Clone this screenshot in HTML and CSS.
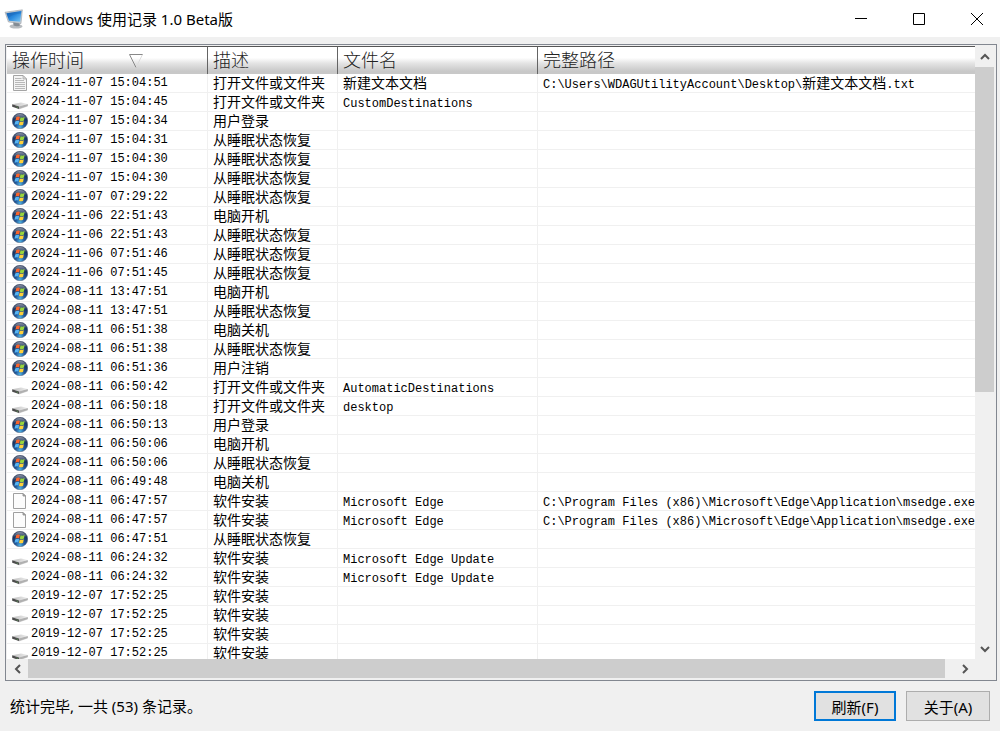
FILE: index.html
```html
<!DOCTYPE html>
<html lang="zh-CN">
<head>
    <meta charset="UTF-8">
    <meta name="viewport" content="width=device-width, initial-scale=1.0">
    <title>Windows 使用记录 1.0 Beta版</title>
    <link rel="stylesheet" href="styles.css">
</head>
<body>
    <!-- Shared icons -->
    <svg class="defs" aria-hidden="true">
        <defs>
            <radialGradient id="orbFill" cx="50%" cy="90%" r="80%">
                <stop offset="0" stop-color="#4fb4e4"/>
                <stop offset="0.35" stop-color="#22589a"/>
                <stop offset="1" stop-color="#122448"/>
            </radialGradient>
            <linearGradient id="orbGloss" x1="0" y1="0" x2="0" y2="1">
                <stop offset="0" stop-color="#fff" stop-opacity="0.5"/>
                <stop offset="1" stop-color="#fff" stop-opacity="0"/>
            </linearGradient>
            <linearGradient id="screenFill" x1="0" y1="0" x2="1" y2="1">
                <stop offset="0" stop-color="#1560b4"/>
                <stop offset="0.5" stop-color="#2a8ade"/>
                <stop offset="1" stop-color="#7cc8f6"/>
            </linearGradient>
            <linearGradient id="driveTop" x1="0" y1="0" x2="1" y2="0">
                <stop offset="0" stop-color="#bdbdbd"/>
                <stop offset="1" stop-color="#f0f0f0"/>
            </linearGradient>
        </defs>
        <symbol id="orb" viewBox="0 0 16 16">
            <circle cx="8" cy="8" r="7.8" fill="url(#orbFill)" stroke="#5c6880" stroke-width="0.5"/>
            <path d="M1 6.6A7.2 7.2 0 0 1 15 6.6Q8 2.6 1 6.6Z" fill="url(#orbGloss)"/>
            <path d="M4.2 4.2Q6 3 7.9 4L7.2 7.4Q5.4 6.6 3.4 7.7Z" fill="#f8642c"/>
            <path d="M8.5 4.3Q10.4 5.2 12.6 4.1L11.9 7.6Q9.8 8.6 7.8 7.7Z" fill="#98d43c"/>
            <path d="M3.2 8.4Q5.2 7.3 7.1 8.1L6.4 11.5Q4.5 10.7 2.5 11.8Z" fill="#54b4f4"/>
            <path d="M7.7 8.4Q9.7 9.3 11.8 8.3L11.1 11.8Q9 12.8 7 11.8Z" fill="#ffd038"/>
        </symbol>
        <symbol id="drive" viewBox="0 0 16 16">
            <path d="M1 12L7 15.4L15.6 12.6V11Z" fill="#dedede"/>
            <path d="M.2 10.2L9 8.6L15.8 9.9L7 12.4Z" fill="url(#driveTop)"/>
            <path d="M.2 10.2L7 12.4V15L.2 12.8Z" fill="#4c4c4c"/>
            <path d="M7 12.4L15.8 9.9V12L7 15Z" fill="#b0b0b0"/>
            <path d="M4.6 12.6L5.8 13V13.7L4.6 13.3Z" fill="#5fae5a"/>
        </symbol>
        <symbol id="text" viewBox="0 0 16 16">
            <path d="M1.5 .5H11L14.5 4V15.5H1.5Z" fill="#f4f4f4" stroke="#a4a4a4"/>
            <path d="M11 .5V4H14.5Z" fill="#dcdcdc" stroke="#9a9a9a" stroke-width="0.6"/>
            <path d="M3 3.5H9.5M3 5.5H12M3 7.5H13M3 9.5H13M3 11.5H13M3 13.5H13" stroke="#b8b8b8"/>
        </symbol>
        <symbol id="blank" viewBox="0 0 16 16">
            <path d="M1.5 .5H11L13.5 3V15.5H1.5Z" fill="#fcfcfc" stroke="#a0a0a0"/>
            <path d="M11 .5V3H13.5Z" fill="#b4b4b4" stroke="#888" stroke-width="0.8"/>
        </symbol>
    </svg>

    <header class="titlebar">
        <svg class="app-icon" viewBox="0 0 20 20" aria-hidden="true">
            <ellipse cx="12" cy="17.4" rx="6.5" ry="2.2" fill="#b8bcc0"/>
            <path d="M9 12L15 13L16 16.4Q13 18 9.6 16.6Z" fill="#848c94"/>
            <path d="M1 3.2L18.4 .8L17 14.6L4.4 13Z" fill="#c6ccd2" stroke="#8e969e" stroke-width="0.5"/>
            <path d="M2.4 4.2L17.4 2L16.2 12.8L5 11.8Z" fill="url(#screenFill)"/>
            <path d="M4.2 9.2Q8 5 17.1 4.4L17.4 2L2.4 4.2Z" fill="#1458a8" opacity="0.3"/>
        </svg>
        <h1 class="title">Windows 使用记录 1.0 Beta版</h1>
        <div class="window-buttons">
            <button type="button" aria-label="最小化"><svg viewBox="0 0 12 12"><path d="M0 5.5H12"/></svg></button>
            <button type="button" aria-label="最大化"><svg viewBox="0 0 12 12"><path d="M.5 .5H11.5V11.5H.5Z"/></svg></button>
            <button type="button" aria-label="关闭"><svg viewBox="0 0 12 12"><path d="M0 0L12 12M12 0L0 12"/></svg></button>
        </div>
    </header>

    <main class="list">
        <div class="table-wrap">
            <table>
                <colgroup>
                    <col class="col-time">
                    <col class="col-desc">
                    <col class="col-name">
                    <col>
                </colgroup>
                <thead>
                    <tr>
                        <th>
                            <div class="sorted">操作时间
                                <svg class="sort" viewBox="0 0 14 14" aria-hidden="true"><path d="M14 .5H.5L7 13.5" stroke="#888"/><path d="M7 13.5L13.5 .5" stroke="#ddd"/></svg>
                            </div>
                        </th>
                        <th>描述</th>
                        <th>文件名</th>
                        <th>完整路径</th>
                    </tr>
                </thead>
                <tbody id="records"></tbody>
            </table>
        </div>
        <div class="scroll vertical">
            <button type="button" aria-label="向上滚动"><svg viewBox="0 0 10 10"><path d="M1 7L5 3L9 7"/></svg></button>
            <div class="track"><div class="thumb"></div></div>
            <button type="button" aria-label="向下滚动"><svg viewBox="0 0 10 10"><path d="M1 3L5 7L9 3"/></svg></button>
        </div>
        <div class="scroll horizontal">
            <button type="button" aria-label="向左滚动"><svg viewBox="0 0 10 10"><path d="M7 1L3 5L7 9"/></svg></button>
            <div class="track"><div class="thumb"></div></div>
            <button type="button" aria-label="向右滚动"><svg viewBox="0 0 10 10"><path d="M3 1L7 5L3 9"/></svg></button>
        </div>
    </main>

    <footer class="footer">
        <p class="status">统计完毕, 一共 (53) 条记录。</p>
        <button type="button" class="button primary">刷新(F)</button>
        <button type="button" class="button">关于(A)</button>
    </footer>

    <script>
        const edge = 'C:\\Program Files (x86)\\Microsoft\\Edge\\Application\\msedge.exe,0';

        // icon, time, description, file name, full path
        const records = [
            ['text', '2024-11-07 15:04:51', '打开文件或文件夹', '新建文本文档', 'C:\\Users\\WDAGUtilityAccount\\Desktop\\新建文本文档.txt'],
            ['drive', '2024-11-07 15:04:45', '打开文件或文件夹', 'CustomDestinations'],
            ['orb', '2024-11-07 15:04:34', '用户登录'],
            ['orb', '2024-11-07 15:04:31', '从睡眠状态恢复'],
            ['orb', '2024-11-07 15:04:30', '从睡眠状态恢复'],
            ['orb', '2024-11-07 15:04:30', '从睡眠状态恢复'],
            ['orb', '2024-11-07 07:29:22', '从睡眠状态恢复'],
            ['orb', '2024-11-06 22:51:43', '电脑开机'],
            ['orb', '2024-11-06 22:51:43', '从睡眠状态恢复'],
            ['orb', '2024-11-06 07:51:46', '从睡眠状态恢复'],
            ['orb', '2024-11-06 07:51:45', '从睡眠状态恢复'],
            ['orb', '2024-08-11 13:47:51', '电脑开机'],
            ['orb', '2024-08-11 13:47:51', '从睡眠状态恢复'],
            ['orb', '2024-08-11 06:51:38', '电脑关机'],
            ['orb', '2024-08-11 06:51:38', '从睡眠状态恢复'],
            ['orb', '2024-08-11 06:51:36', '用户注销'],
            ['drive', '2024-08-11 06:50:42', '打开文件或文件夹', 'AutomaticDestinations'],
            ['drive', '2024-08-11 06:50:18', '打开文件或文件夹', 'desktop'],
            ['orb', '2024-08-11 06:50:13', '用户登录'],
            ['orb', '2024-08-11 06:50:06', '电脑开机'],
            ['orb', '2024-08-11 06:50:06', '从睡眠状态恢复'],
            ['orb', '2024-08-11 06:49:48', '电脑关机'],
            ['blank', '2024-08-11 06:47:57', '软件安装', 'Microsoft Edge', edge],
            ['blank', '2024-08-11 06:47:57', '软件安装', 'Microsoft Edge', edge],
            ['orb', '2024-08-11 06:47:51', '从睡眠状态恢复'],
            ['drive', '2024-08-11 06:24:32', '软件安装', 'Microsoft Edge Update'],
            ['drive', '2024-08-11 06:24:32', '软件安装', 'Microsoft Edge Update'],
            ['drive', '2019-12-07 17:52:25', '软件安装'],
            ['drive', '2019-12-07 17:52:25', '软件安装'],
            ['drive', '2019-12-07 17:52:25', '软件安装'],
            ['drive', '2019-12-07 17:52:25', '软件安装']
        ];

        // Chinese parts of a name are set larger than the monospaced Latin ones
        function mixed(text) {
            return text.replace(/[\u4e00-\u9fff]+/g, '<span class="cjk">$&</span>');
        }

        document.getElementById('records').innerHTML = records.map(([icon, time, desc, name = '', path = '']) => `
            <tr>
                <td><div class="entry"><svg class="icon" aria-hidden="true"><use href="#${icon}"/></svg><span class="mono">${time}</span></div></td>
                <td>${desc}</td>
                <td><span class="mono">${mixed(name)}</span></td>
                <td><span class="mono">${mixed(path)}</span></td>
            </tr>`).join('');
    </script>
</body>
</html>
```

FILE: styles.css
```css
* {
    box-sizing: border-box;
}

body {
    margin: 0;
    height: 100vh;
    display: flex;
    flex-direction: column;
    background-color: #f0f0f0;
    color: #000;
    font-family: "Noto Sans", "Noto Sans CJK SC", sans-serif;
    font-size: 15px;
    overflow: hidden;
}

button {
    font-family: inherit;
    color: inherit;
}

.defs {
    position: absolute;
    width: 0;
    height: 0;
}

/* Title bar */
.titlebar {
    display: flex;
    align-items: center;
    flex-shrink: 0;
    height: 37px;
    padding-left: 4px;
    background-color: #fff;
}

.app-icon {
    width: 20px;
    height: 20px;
}

.title {
    flex: 1;
    margin: 0 0 0 5px;
    font-size: 15px;
    line-height: 20px;
    font-weight: normal;
}

.window-buttons {
    display: flex;
    gap: 12px;
}

.window-buttons button {
    display: flex;
    align-items: center;
    justify-content: center;
    width: 46px;
    height: 36px;
    padding: 0;
    border: 0;
    background: none;
}

.window-buttons svg {
    width: 12px;
    height: 12px;
    fill: none;
    stroke: #000;
}

/* Record list */
.list {
    flex: 1;
    min-height: 0;
    display: grid;
    grid-template-columns: minmax(0, 1fr) 20px;
    grid-template-rows: minmax(0, 1fr) 20px;
    margin: 7px 3px 0 5px;
    padding: 1px;
    border: 1px solid #828790;
    background-color: #f0f0f0;
}

.table-wrap {
    overflow: hidden;
    background-color: #fff;
}

table {
    width: 100%;
    table-layout: fixed;
    border-collapse: separate;
    border-spacing: 0;
}

.col-time {
    width: 201px;
}

.col-desc {
    width: 130px;
}

.col-name {
    width: 200px;
}

th {
    height: 28px;
    padding: 0 5px;
    border-top: 1px solid #555;
    border-right: 1px solid #646464;
    background: linear-gradient(#fff 40%, #e4e4e4 60%, #c8c8c8 90%);
    color: #222;
    font-family: "Noto Sans CJK SC", sans-serif;
    font-size: 18px;
    line-height: 24px;
    font-weight: 300;
    text-align: left;
    vertical-align: top;
}

th:last-child,
td:last-child {
    border-right: 0;
}

.sorted {
    display: flex;
    align-items: center;
    gap: 45px;
}

.sort {
    width: 14px;
    height: 14px;
    margin-top: 3px;
    fill: none;
}

td {
    height: 19px;
    padding: 0 5px;
    border-right: 1px solid #f0f0f0;
    border-bottom: 1px solid #f0f0f0;
    font-family: "Noto Sans CJK SC", sans-serif;
    font-size: 14px;
    line-height: 16px;
    white-space: nowrap;
    vertical-align: top;
    overflow: hidden;
}

td:last-child {
    padding-right: 0;
}

.entry {
    display: flex;
    align-items: center;
    gap: 3px;
    height: 18px;
}

.icon {
    width: 16px;
    height: 16px;
}

.mono {
    font-family: "Liberation Mono", "Noto Sans CJK SC", monospace;
    font-size: 12px;
    line-height: 12px;
}

.cjk {
    font-size: 14px;
}

/* Scroll bars */
.scroll {
    display: flex;
    background-color: #f0f0f0;
}

.scroll button {
    display: flex;
    align-items: center;
    justify-content: center;
    flex: 0 0 21px;
    padding: 0;
    border: 0;
    background: none;
}

.scroll svg {
    width: 10px;
    height: 10px;
    fill: none;
    stroke: #555;
    stroke-width: 2;
}

.track {
    flex: 1;
}

.thumb {
    background-color: #cdcdcd;
}

.vertical {
    flex-direction: column;
}

.vertical .thumb {
    width: 19px;
    height: 57%;
}

.horizontal .thumb {
    width: 99%;
    height: 19px;
}

/* Footer */
.footer {
    display: flex;
    align-items: center;
    flex-shrink: 0;
    gap: 10px;
    padding: 10px;
}

.status {
    flex: 1;
    margin: 0;
    line-height: 20px;
}

.button {
    min-width: 84px;
    height: 30px;
    padding: 0 12px;
    border: 1px solid #adadad;
    background-color: #e1e1e1;
    font-size: 15px;
}

.button.primary {
    min-width: 82px;
    border: 2px solid #0078d7;
}
```
